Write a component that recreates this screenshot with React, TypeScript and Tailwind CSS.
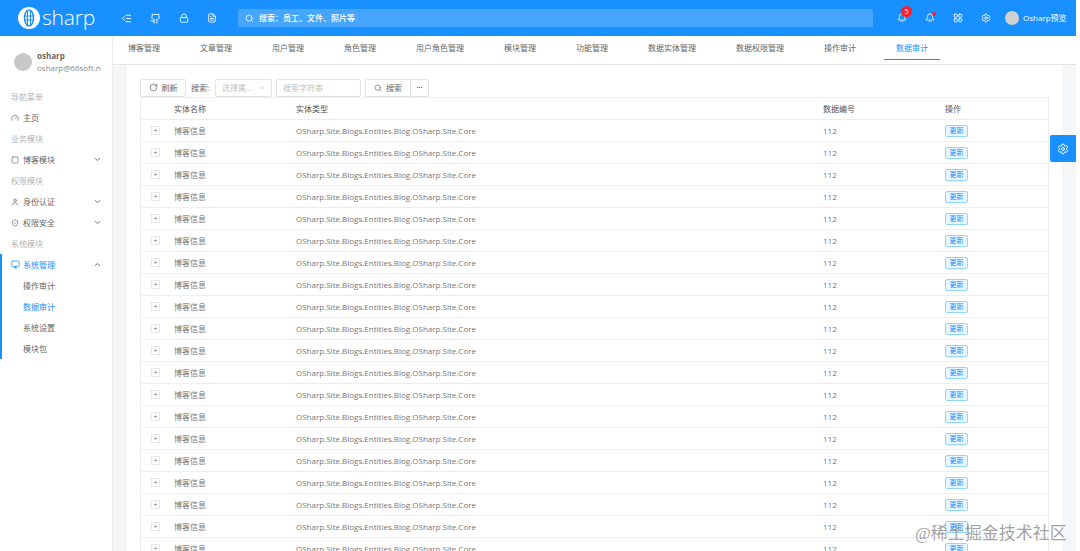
import { ChevronDown, ChevronUp, Bell, LayoutGrid, Settings, Search, RotateCw, Lock, FileText, Github, User, ShieldCheck, Monitor, Square, Gauge, IndentDecrease, Ellipsis } from "lucide-react"

const cjk = "font-['Open_Sans','Noto_Sans_CJK_SC',sans-serif]"
const tabs = ["博客管理", "文章管理", "用户管理", "角色管理", "用户角色管理", "模块管理", "功能管理", "数据实体管理", "数据权限管理", "操作审计", "数据审计"]

function GroupLabel({ children }: { children: string }) {
  return <div className="h-[21px] pl-[11px] flex items-center text-[#b5b5b5]">{children}</div>
}

function MenuItem({ icon, label, open, active }: { icon?: React.ReactNode; label: string; open?: "down" | "up"; active?: boolean }) {
  return (
    <div className={`h-[21px] pl-[11px] pr-[10px] flex items-center ${active ? "text-[#1890ff]" : "text-[#666666]"}`}>
      <span className="w-[12px] flex items-center">{icon}</span>
      <span className="flex-1">{label}</span>
      {open === "down" && <ChevronDown size={9} strokeWidth={2.4} className="text-[#666666]" />}
      {open === "up" && <ChevronUp size={9} strokeWidth={2.4} className="text-[#666666]" />}
    </div>
  )
}

function Sidebar() {
  return (
    <aside className="w-[113px] shrink-0 bg-white border-r border-[#eeeeee]">
      <div className="h-[50px] pl-[14px] flex items-center gap-[5px]">
        <div className="w-[18px] h-[18px] rounded-full bg-[#c8c8c8] mt-[1px]" />
        <div className="mt-[2px]">
          <div className="font-bold text-[#666666] leading-[12px]">osharp</div>
          <div className="text-[#888888] leading-[12px] w-[64px] overflow-hidden whitespace-nowrap">osharp@66soft.ne</div>
        </div>
      </div>
      <GroupLabel>导航菜单</GroupLabel>
      <MenuItem label="主页" icon={<Gauge size={8} />} />
      <GroupLabel>业务模块</GroupLabel>
      <MenuItem label="博客模块" icon={<Square size={8} />} open="down" />
      <GroupLabel>权限模块</GroupLabel>
      <MenuItem label="身份认证" icon={<User size={8} />} open="down" />
      <MenuItem label="权限安全" icon={<ShieldCheck size={8} />} open="down" />
      <GroupLabel>系统模块</GroupLabel>
      <div className="border-l-2 border-[#1890ff] -ml-0 [&>div]:pl-[9px]">
        <MenuItem label="系统管理" icon={<Monitor size={9} />} open="up" active />
        <div className="h-[21px] !pl-[21px] flex items-center text-[#666666]">操作审计</div>
        <div className="h-[21px] !pl-[21px] flex items-center text-[#1890ff]">数据审计</div>
        <div className="h-[21px] !pl-[21px] flex items-center text-[#666666]">系统设置</div>
        <div className="h-[21px] !pl-[21px] flex items-center text-[#666666]">模块包</div>
      </div>
    </aside>
  )
}

function Header() {
  return (
    <header className="h-[36px] bg-[#1890ff] text-white flex items-center shrink-0">
      <div className="w-[118px] pl-[18px] flex items-center gap-[2px]">
        <svg width="22" height="22" viewBox="0 0 22 22">
          <circle cx="11" cy="11" r="11" fill="#ffffff" />
          <ellipse cx="11" cy="11" rx="4.5" ry="8" fill="none" stroke="#1890ff" strokeWidth="1.5" />
          <path d="M9.5 4v14M12.5 4v14M6.5 9h9M6.5 13h9" stroke="#1890ff" strokeWidth="1" />
        </svg>
        <span className="text-[21px] leading-none font-['Open_Sans',sans-serif] font-light tracking-[-0.2px] -mt-[2px]">sharp</span>
      </div>
      <div className="flex items-center gap-[18px] pl-[3px]">
        <IndentDecrease size={11} />
        <Github size={11} />
        <Lock size={10} />
        <FileText size={10} />
      </div>
      <div className="ml-[21px] w-[635px] h-[18px] rounded-[2px] bg-white/20 flex items-center pl-[7px] gap-[5px] font-medium">
        <Search size={9} />
        <span>搜索：员工、文件、照片等</span>
      </div>
      <div className="relative ml-[23px] w-[12px] flex justify-center">
        <Bell size={10} />
        <span className="absolute -top-[7px] left-[5px] w-[11px] h-[11px] rounded-full bg-[#f5222d] text-[7px] leading-[11px] text-center">5</span>
      </div>
      <div className="relative ml-[16px] w-[12px] flex justify-center">
        <Bell size={10} />
        <span className="absolute -top-[1px] right-[0px] w-[4px] h-[4px] rounded-full bg-[#f5222d]" />
      </div>
      <LayoutGrid size={10} className="ml-[17px]" />
      <Settings size={10} className="ml-[18px]" />
      <div className="w-[14px] h-[14px] rounded-full bg-[#d0d0d0] ml-[14px]" />
      <span className="ml-[4px] whitespace-nowrap">Osharp预览</span>
    </header>
  )
}

function Toolbar() {
  return (
    <div className="h-[19px] flex items-center text-[#666666]">
      <div className="w-[46px] h-[18px] border border-[#e4e4e4] rounded-[2px] flex items-center justify-center gap-[4px]">
        <RotateCw size={9} />
        <span>刷新</span>
      </div>
      <span className="ml-[5px] w-[24px] whitespace-nowrap">搜索:</span>
      <div className="w-[57px] h-[18px] border border-[#e4e4e4] rounded-[2px] flex items-center pl-[6px] text-[#bfbfbf]">
        <span className="flex-1">选择属...</span>
        <ChevronDown size={8} className="mr-[5px]" />
      </div>
      <div className="ml-[4px] w-[85px] h-[18px] border border-[#e4e4e4] rounded-[2px] flex items-center pl-[6px] text-[#bfbfbf]">搜索字符串</div>
      <div className="ml-[4px] w-[46px] h-[18px] border border-[#e4e4e4] rounded-l-[2px] flex items-center justify-center gap-[4px]">
        <Search size={8} />
        <span>搜索</span>
      </div>
      <div className="w-[18px] h-[18px] border border-l-0 border-[#e4e4e4] rounded-r-[2px] flex items-center justify-center">
        <Ellipsis size={7} />
      </div>
    </div>
  )
}

function Row() {
  return (
    <div className="h-[22px] flex items-center border-b border-[#eeeeee] text-[#777777]">
      <div className="w-[33px] pl-[10px]">
        <div className="w-[9px] h-[9px] border border-[#e8e8e8] text-[7px] leading-[7px] text-center">+</div>
      </div>
      <div className="w-[122px]">博客信息</div>
      <div className="w-[527px] whitespace-nowrap">OSharp.Site.Blogs.Entities.Blog.OSharp.Site.Core</div>
      <div className="w-[122px]">112</div>
      <div>
        <span className="block w-[23px] h-[12px] rounded-[2px] border border-[#91d5ff] bg-[#e6f7ff] text-[#1890ff] text-[7px] leading-[10px] text-center">更新</span>
      </div>
    </div>
  )
}

export default function App() {
  return (
    <div className={`relative h-screen overflow-hidden bg-white text-[8px] ${cjk}`}>
      <div className="mr-[4px] h-full flex flex-col">
        <Header />
        <div className="flex-1 flex min-h-0">
          <Sidebar />
          <main className="flex-1 min-w-0 flex flex-col bg-[#f4f6f8]">
            <nav className="h-[29px] shrink-0 bg-white border-b border-[#e4e4e4] pl-[3px] flex gap-[16px] text-[#666666]">
              {tabs.map((tab) => (
                <div key={tab} className={`h-[24px] px-[12px] flex items-center ${tab === "数据审计" ? "text-[#1890ff] border-b border-[#1890ff]" : ""}`}>
                  {tab}
                </div>
              ))}
            </nav>
            <div className="flex-1 min-h-0 ml-[14px] mr-[14px] bg-white px-[13px] pt-[13px] overflow-hidden">
              <Toolbar />
              <div className="border-x border-t border-[#eeeeee]">
                <div className="h-[22px] flex items-center border-b border-[#eeeeee] text-[#555555]">
                  <div className="w-[33px]" />
                  <div className="w-[122px]">实体名称</div>
                  <div className="w-[527px]">实体类型</div>
                  <div className="w-[122px]">数据编号</div>
                  <div>操作</div>
                </div>
                {Array.from({ length: 20 }).map((_, i) => (
                  <Row key={i} />
                ))}
              </div>
            </div>
          </main>
        </div>
      </div>
      <div className="absolute left-[1050px] top-[135px] w-[26px] h-[27px] rounded-l-[2px] bg-[#1890ff] text-white flex items-center justify-center">
        <Settings size={12} />
      </div>
      <div className="absolute left-[915px] top-[523px] text-[17px] leading-[22px] whitespace-nowrap text-[#8a8a8a]/80 font-['Liberation_Serif','Noto_Sans_CJK_SC',serif]">@稀土掘金技术社区</div>
    </div>
  )
}
